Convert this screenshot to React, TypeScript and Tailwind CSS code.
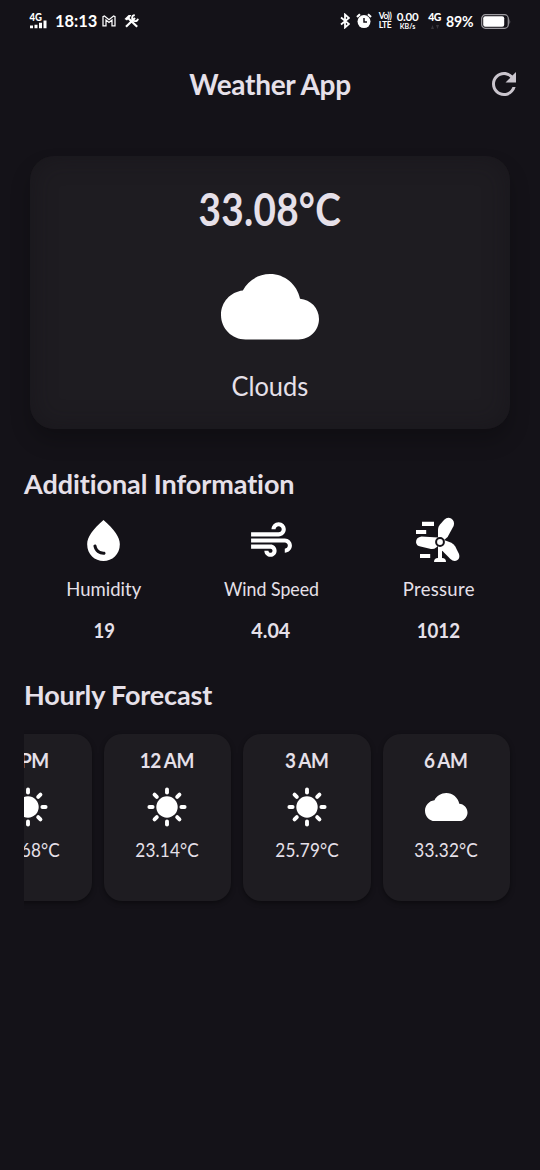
import type { ReactNode } from "react";

const CloudIcon = ({ className }: { className: string }) => (
  <svg viewBox="0 4 24 16" fill="#fff" className={className}>
    <path d="M19.35 10.04C18.67 6.59 15.64 4 12 4 9.11 4 6.6 5.64 5.35 8.04 2.34 8.36 0 10.91 0 14c0 3.31 2.69 6 6 6h13c2.76 0 5-2.24 5-5 0-2.64-2.05-4.78-4.65-4.96z" />
  </svg>
);

const SunIcon = () => (
  <svg viewBox="-20 -20 40 40" className="h-10 w-10 shrink-0">
    <circle r="10.7" fill="#fff" />
    {[0, 45, 90, 135, 180, 225, 270, 315].map((a) => (
      <path key={a} d="M0 -14.4V-17.6" stroke="#fff" strokeWidth="3.9" strokeLinecap="round" transform={`rotate(${a})`} />
    ))}
  </svg>
);

const DropIcon = () => (
  <svg viewBox="0 0 24 24" fill="#fff" className="h-[49px] w-[49px]">
    <path d="M12 2c-5.33 4.55-8 8.48-8 11.8 0 4.98 3.8 8.2 8 8.2s8-3.22 8-8.2C20 10.48 17.33 6.55 12 2zM7.83 14c.37 0 .67.26.74.62.41 2.22 2.28 2.98 3.64 2.87.43-.02.79.32.79.75 0 .4-.32.73-.72.75-2.13.13-4.62-1.09-5.19-4.12-.08-.45.28-.87.74-.87z" />
  </svg>
);

const AirIcon = () => (
  <svg viewBox="0 0 24 24" fill="#fff" className="h-[49px] w-[49px]">
    <path d="M14.5 17c0 1.65-1.35 3-3 3s-3-1.35-3-3h2c0 .55.45 1 1 1s1-.45 1-1-.45-1-1-1H2v-2h9.5c1.65 0 3 1.35 3 3zM19 6.5C19 4.57 17.43 3 15.5 3S12 4.57 12 6.5h2c0-.83.67-1.5 1.5-1.5s1.5.67 1.5 1.5S16.33 8 15.5 8H2v2h13.5c1.93 0 3.5-1.57 3.5-3.5zM18.5 11H2v2h16.5c.83 0 1.5.67 1.5 1.5s-.67 1.5-1.5 1.5v2c1.93 0 3.5-1.57 3.5-3.5S20.43 11 18.5 11z" />
  </svg>
);

const TurbineIcon = () => (
  <svg viewBox="1 0 49 49" fill="#fff" className="h-[49px] w-[49px]">
    <path d="M9 5.8H21V10H9zM3 14H13.2V18H3zM7 38H17.2V42H7z" />
    <path d="M25 23V13.5Q25 11 26.6 9L31.2 3.8Q34.6 0.4 38.2 2.6Q42.2 5.2 40.6 10L34.6 21L30 25Z" />
    <path d="M25 21.5L8.5 20.4Q3 21.2 3 26.2Q3.4 29.8 7.5 30.6L18 33Q21 33.4 23.5 31.2L28 27Z" />
    <path d="M28 29.5L31 24L38.4 26.8Q41 28.2 42.3 30.6L46 38Q47.2 42 44.5 44Q41 46.2 37.4 43L29 34.5Z" />
    <path d="M25 30H29V42Q33 42 33 46H21Q21 42 25 42Z" />
    <circle cx="27" cy="26" r="3.9" fill="#fff" stroke="#141218" strokeWidth="2" />
  </svg>
);

const StatusBar = () => (
  <div className="flex h-[42px] items-center justify-between pl-[29px] pr-[29px] text-white">
    <div className="flex items-center">
      <svg viewBox="0 0 18 18" className="h-[18px] w-[18px]" fill="#fff">
        <text x="0.5" y="8.5" fontSize="10.5" fontWeight="900" textLength="12.5" lengthAdjust="spacingAndGlyphs">4G</text>
        <path d="M1 13.5h3v2.8H1zM5.5 12.8h3v3.5h-3zM10 10.8h3v5.5h-3zM14.5 8.5h3v7.8h-3z" />
      </svg>
      <span className="ml-2 w-[42px] origin-left scale-x-[.94] whitespace-nowrap text-[17.5px] font-bold leading-5">18:13</span>
      <svg viewBox="0 0 14 12" className="ml-[5px] h-3 w-[14px]" fill="none" stroke="#fff" strokeWidth="1.25">
        <path d="M1 10.8V1.6L2.4 1L7 4.7L11.6 1L13 1.6V10.8H10V5L7 7.4L4 5V10.8Z" />
      </svg>
      <svg viewBox="0 0 15 14" className="ml-[8px] h-[14px] w-[15px]" fill="none" stroke="#fff" strokeWidth="2.2">
        <path d="M2 12.8L11 4M4 4L13.2 12.8" />
        <path d="M0.5 5L4.6 1H7.4L6 3.2L3 6.6Z" fill="#fff" stroke="none" />
        <path d="M10.8 1.2A3 3 0 1 0 14 4.8" strokeWidth="1.8" />
      </svg>
    </div>
    <div className="flex items-center">
      <svg viewBox="0 0 10 16" className="h-4 w-[10px]" fill="none" stroke="#fff" strokeWidth="1.8">
        <path d="M1 4.5L9 11L5 14.5V1.5L9 5L1 11.5" />
      </svg>
      <svg viewBox="0 0 16 16" className="ml-[6px] h-4 w-4">
        <circle cx="8" cy="8.6" r="6.5" fill="#fff" />
        <path d="M1 4L4 1.3M15 4L12 1.3" stroke="#fff" strokeWidth="2.2" />
        <path d="M8 5V9H11" stroke="#141218" strokeWidth="1.5" fill="none" />
      </svg>
      <div className="ml-[6px] flex w-[14px] flex-col items-center text-[8.5px] font-bold leading-[9px]">
        <span className="whitespace-nowrap tracking-[-0.5px]">Vo))</span>
        <span className="whitespace-nowrap tracking-[-0.3px]">LTE</span>
      </div>
      <div className="ml-[5px] flex w-[21px] flex-col items-center font-bold">
        <span className="text-[11.5px] leading-[10px] tracking-[-0.3px]">0.00</span>
        <span className="text-[7px] leading-[8px]">KB/s</span>
      </div>
      <div className="ml-[10px] flex h-[18px] w-[13px] flex-col items-center">
        <span className="text-[10.5px] font-black leading-[10px] tracking-[-0.7px]">4G</span>
        <svg viewBox="0 0 8 4" className="mt-[3px] h-1 w-2" fill="#38363c">
          <path d="M1.5 0L3 4H0ZM5 0H8L6.5 4Z" />
        </svg>
      </div>
      <span className="ml-[5px] w-[28px] origin-left scale-x-[.94] whitespace-nowrap text-[15px] font-bold leading-5 tracking-[-0.2px]">89%</span>
      <svg viewBox="0 0 30 15" className="ml-[7px] h-[15px] w-[30px]">
        <rect x="0.7" y="0.7" width="26.6" height="13.6" rx="3.8" fill="none" stroke="#9d9ba0" strokeWidth="1.2" />
        <rect x="2.2" y="2.2" width="21" height="10.6" rx="2" fill="#fff" />
        <path d="M28.4 4.5Q30 7.5 28.4 10.5Z" fill="#77757b" />
      </svg>
    </div>
  </div>
);

type InfoProps = { icon: ReactNode; label: string; value: string; labelClass: string; valueClass: string };

const InfoItem = ({ icon, label, value, labelClass, valueClass }: InfoProps) => (
  <div className="flex w-[167.5px] flex-col items-center">
    {icon}
    <span className={`mt-[10px] whitespace-nowrap text-[18.5px] leading-7 ${labelClass}`}>{label}</span>
    <span className={`mt-[13px] text-[21px] font-bold leading-7 ${valueClass}`}>{value}</span>
  </div>
);

type HourProps = { time: string; temp: string; cloudy?: boolean };

const HourCard = ({ time, temp, cloudy }: HourProps) => (
  <div className="flex h-[167px] w-[127.5px] shrink-0 flex-col items-center rounded-[18px] bg-[#1e1c21] pt-3 shadow-[0_2px_5px_rgba(0,0,0,0.4)]">
    <span className="scale-x-[.88] whitespace-nowrap text-[21.5px] font-bold leading-[29px] tracking-[-0.4px] [word-spacing:-1px]">{time}</span>
    <div className="mt-3 flex h-10 items-center">
      {cloudy ? <CloudIcon className="h-[28.5px] w-[42.5px]" /> : <SunIcon />}
    </div>
    <span className="mt-[9px] scale-x-[.88] whitespace-nowrap text-[19.5px] leading-7 tracking-[0.2px]">{temp}</span>
  </div>
);

const hours: HourProps[] = [
  { time: "9 PM", temp: "24.68°C" },
  { time: "12 AM", temp: "23.14°C" },
  { time: "3 AM", temp: "25.79°C" },
  { time: "6 AM", temp: "33.32°C", cloudy: true },
];

export default function App() {
  return (
    <div className="flex h-[1170px] w-[540px] flex-col overflow-hidden bg-[#141218] font-['Lato',sans-serif] text-[#e6e0e9] [font-variant-ligatures:none]">
      <StatusBar />
      <header className="grid h-[84px] grid-cols-[1fr_auto_1fr] items-center">
        <span />
        <h1 className="whitespace-nowrap text-[28px] font-bold leading-9 tracking-[-0.3px]">Weather App</h1>
        <svg viewBox="0 0 24 24" fill="#cac5cd" className="mr-[18px] h-9 w-9 justify-self-end">
          <path d="M17.65 6.35C16.2 4.9 14.21 4 12 4c-4.42 0-7.99 3.58-7.99 8s3.57 8 7.99 8c3.73 0 6.84-2.55 7.73-6h-2.08c-.82 2.33-3.04 4-5.65 4-3.31 0-6-2.69-6-6s2.69-6 6-6c1.66 0 3.14.69 4.22 1.78L13 11h7V4l-2.35 2.35z" />
        </svg>
      </header>

      <section className="mx-[30px] mt-[30px] flex h-[273px] flex-col items-center rounded-3xl bg-[#1e1c21] pt-[26px] shadow-[0_12px_20px_rgba(0,0,0,0.22),inset_0_0_24px_rgba(20,18,24,0.5)]">
        <span className="scale-x-[.86] whitespace-nowrap text-[45px] font-bold leading-[54px] tracking-[0.3px]">33.08°C</span>
        <CloudIcon className="mt-[38px] h-[65.5px] w-[98px]" />
        <span className="mt-[28px] scale-x-[.94] text-[27px] leading-9">Clouds</span>
      </section>

      <h2 className="ml-6 mt-[37px] whitespace-nowrap text-[27px] font-bold leading-9 tracking-[-0.07px]">Additional Information</h2>
      <div className="ml-5 mt-[14px] flex">
        <InfoItem icon={<DropIcon />} label="Humidity" value="19" labelClass="" valueClass="scale-x-[.88]" />
        <InfoItem icon={<AirIcon />} label="Wind Speed" value="4.04" labelClass="scale-x-[.96]" valueClass="scale-x-[.94]" />
        <InfoItem icon={<TurbineIcon />} label="Pressure" value="1012" labelClass="tracking-[0.3px]" valueClass="scale-x-[.89]" />
      </div>

      <h2 className="ml-6 mt-[33px] whitespace-nowrap text-[27px] font-bold leading-9 tracking-[-0.15px]">Hourly Forecast</h2>
      <div className="mx-6 flex justify-end gap-3 overflow-hidden pb-4 pr-1.5 pt-[21px]">
        {hours.map((h) => (
          <HourCard key={h.time} {...h} />
        ))}
      </div>
    </div>
  );
}
